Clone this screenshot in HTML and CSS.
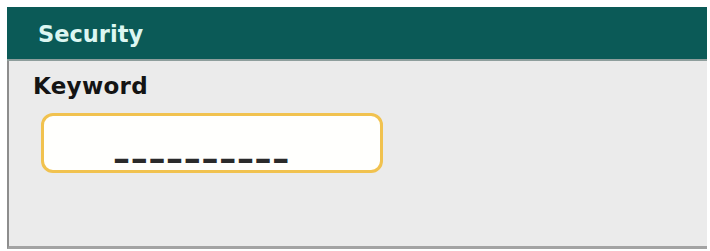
FILE: index.html
```html
<!DOCTYPE html>
<html>
<head>
<meta charset="utf-8">
<link rel="stylesheet" href="styles.css">
</head>
<body>
<div class="panel">
  <div class="header">Security</div>
  <div class="content">
    <div class="label">Keyword</div>
    <div class="field"><span class="dashes">––––––––––</span></div>
  </div>
</div>
</body>
</html>
```
FILE: styles.css
```css
html, body {
  margin: 0;
  padding: 0;
  background: #ffffff;
}
body {
  width: 710px;
  height: 251px;
  overflow: hidden;
  font-family: "DejaVu Sans", "Liberation Sans", sans-serif;
}
.panel {
  margin: 7px 0 0 7px;
  width: 700px;
  height: 242px;
  display: flex;
  flex-direction: column;
}
.header {
  height: 54px;
  background: #0b5a57;
  color: #dcf6f1;
  font-size: 22.5px;
  font-weight: bold;
  padding-left: 31px;
  display: flex;
  align-items: center;
  box-sizing: border-box;
  padding-top: 1px;
  border-bottom: 2px solid #8e9e9c;
}
.content {
  flex: 1;
  background: #ebebeb;
  border-left: 2px solid #8d8d8d;
  border-bottom: 3px solid #a3a3a3;
  padding: 12px 0 0 24px;
}
.label {
  font-size: 23px;
  font-weight: bold;
  color: #141414;
  line-height: 27px;
  letter-spacing: 0.3px;
}
.field {
  margin: 13px 0 0 8px;
  width: 342px;
  height: 60px;
  box-sizing: border-box;
  border: 3px solid #f1c24f;
  border-radius: 12px;
  background: #fffffd;
  padding: 25px 0 0 69px;
}
.dashes {
  font-size: 34px;
  font-weight: bold;
  color: #2a2a2a;
  letter-spacing: 0.7px;
  line-height: 34px;
  display: block;
}
```
